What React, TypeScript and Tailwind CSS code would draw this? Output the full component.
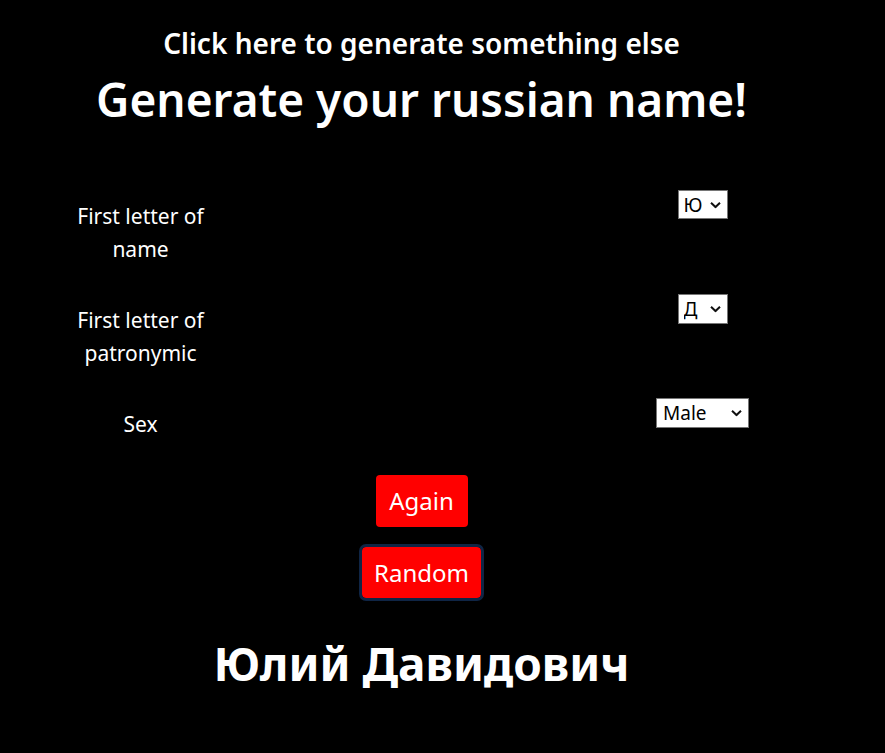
import { useState } from "react";

const font = { fontFamily: '"Noto Sans", "Open Sans", sans-serif' };

const letters = ["А", "Б", "В", "Г", "Д", "Е", "Ж", "З", "И", "К", "Л", "М", "Н", "О", "П", "Р", "С", "Т", "Ф", "Ю", "Я"];

function Chevron() {
  return (
    <svg
      className="pointer-events-none absolute right-[7px] top-1/2 -translate-y-1/2"
      width="11"
      height="7"
      viewBox="0 0 11 7"
      fill="none"
    >
      <path d="M1 1.2 L5.5 5.5 L10 1.2" stroke="#111" strokeWidth="2" />
    </svg>
  );
}

export default function App() {
  const [first, setFirst] = useState("Ю");
  const [patr, setPatr] = useState("Д");
  const [sex, setSex] = useState("Male");

  return (
    <div className="min-h-[753px] w-full bg-black text-white" style={font}>
      <div className="w-[843px] flex flex-col items-center">
        {/* Top link */}
        <a className="mt-[25px] text-[28px] font-semibold leading-[36px] cursor-pointer">
          Click here to generate something else
        </a>
        <h1 className="mt-[6px] text-[46px] font-semibold leading-[64px]">Generate your russian name!</h1>

        {/* Form table */}
        <div className="mt-[59px] grid w-full grid-cols-3 items-start gap-y-[28px]">
          <div className="pt-[10px] text-center text-[21px] leading-[33px]">
            First letter of
            <br />
            name
          </div>
          <div />
          <div className="flex justify-center">
            <div className="relative">
              <select
                value={first}
                onChange={(e) => setFirst(e.target.value)}
                className="block h-[29px] w-[50px] appearance-none border border-[#767676] bg-white pl-[5px] text-[19px] text-black"
              >
                {letters.map((l) => (
                  <option key={l} value={l}>
                    {l}
                  </option>
                ))}
              </select>
              <Chevron />
            </div>
          </div>

          <div className="pt-[10px] text-center text-[21px] leading-[33px]">
            First letter of
            <br />
            patronymic
          </div>
          <div />
          <div className="flex justify-center">
            <div className="relative">
              <select
                value={patr}
                onChange={(e) => setPatr(e.target.value)}
                className="block h-[30px] w-[50px] appearance-none border border-[#767676] bg-white pl-[5px] text-[19px] text-black"
              >
                {letters.map((l) => (
                  <option key={l} value={l}>
                    {l}
                  </option>
                ))}
              </select>
              <Chevron />
            </div>
          </div>

          <div className="pt-[10px] text-center text-[21px] leading-[33px]">Sex</div>
          <div />
          <div className="flex justify-center">
            <div className="relative">
              <select
                value={sex}
                onChange={(e) => setSex(e.target.value)}
                className="block h-[30px] w-[93px] appearance-none border border-[#767676] bg-white pl-[6px] text-[19px] text-black"
              >
                <option value="Male">Male</option>
                <option value="Female">Female</option>
              </select>
              <Chevron />
            </div>
          </div>
        </div>

        {/* Buttons */}
        <button className="mt-[34px] h-[52px] w-[92px] rounded-[4px] bg-[#ff0000] text-[24px] text-white">
          Again
        </button>
        <button className="mt-[20px] h-[51px] w-[119px] rounded-[4px] bg-[#ff0000] text-[24px] text-white outline-[3px] outline-solid outline-[#0f2545]">
          Random
        </button>

        <h2 className="mt-[33px] text-[46px] font-bold leading-[64px]">Юлий Давидович</h2>
      </div>
    </div>
  );
}
